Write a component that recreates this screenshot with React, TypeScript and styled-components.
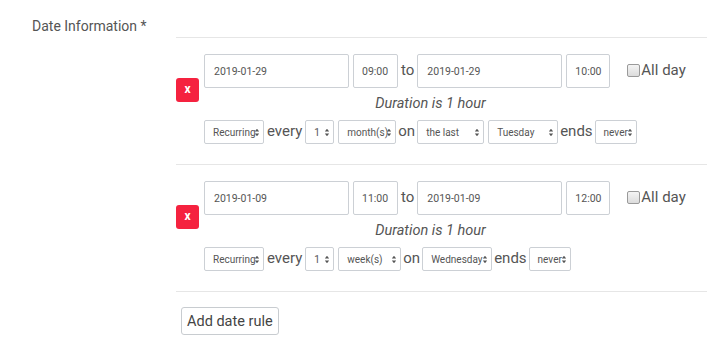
import styled, { createGlobalStyle } from "styled-components";

const GlobalStyle = createGlobalStyle`
  html, body {
    margin: 0;
    padding: 0;
    background: #ffffff;
    font-family: Roboto, "Liberation Sans", sans-serif;
  }
`;

const Page = styled.div`
  width: 707px;
  height: 352px;
  display: grid;
  grid-template-columns: 176px 1fr;
  overflow: hidden;
`;

const Label = styled.div`
  padding: 17px 0 0 32px;
  font-size: 14px;
  color: #555;
  line-height: 18px;
`;

const Rules = styled.div`
  padding-top: 37px;
`;

const Block = styled.div`
  border-top: 1px solid #e6e6e6;
  padding: 16px 0 20px;
  display: grid;
  grid-template-columns: 28px 1fr;
  grid-template-rows: 34px auto auto;
`;

const DeleteCell = styled.div`
  grid-column: 1;
  grid-row: 1 / 4;
  padding-top: 24px;
`;

const DeleteBtn = styled.button`
  width: 23px;
  height: 24px;
  border: none;
  border-radius: 3px;
  background: #f5223f;
  color: #fff;
  font-family: Roboto, "Liberation Sans", sans-serif;
  font-weight: bold;
  font-size: 12px;
  padding: 0 0 2px;
  line-height: 1;
`;

const Row = styled.div`
  grid-column: 2;
  grid-row: 1;
  display: flex;
  align-items: center;
  gap: 4px;
  height: 34px;
`;

const Input = styled.div<{ $w: number }>`
  box-sizing: border-box;
  width: ${(p) => p.$w}px;
  height: 34px;
  border: 1px solid #ccd0d5;
  border-radius: 2px;
  padding: 0 ${(p) => (p.$w < 60 ? 8 : 9)}px;
  display: flex;
  align-items: center;
  font-size: 10.5px;
  color: #555;
`;

const Word = styled.span<{ $mx?: number }>`
  font-size: 15px;
  color: #555;
  margin: 0 ${(p) => p.$mx ?? 0}px;
  line-height: 1;
  padding-bottom: 2px;
`;

const AllDay = styled.label`
  display: flex;
  align-items: center;
  margin-left: 13px;
  margin-top: -2px;
  font-size: 15px;
  color: #555;
`;

const Box = styled.span`
  box-sizing: border-box;
  width: 13px;
  height: 13px;
  border: 1px solid #9a9a9a;
  border-radius: 2px;
  background: linear-gradient(#f4f4f4, #dcdcdc);
  margin-right: 1px;
`;

const Duration = styled.div`
  grid-column: 1 / -1;
  grid-row: 2;
  text-align: center;
  padding-right: 22px;
  font-style: italic;
  font-size: 14.5px;
  color: #555;
  margin-top: 4px;
  line-height: 24px;
`;

const RecRow = styled.div`
  grid-column: 2;
  grid-row: 3;
  display: flex;
  align-items: center;
  gap: 3px;
  margin-top: 4px;
  height: 24px;
`;

const SelectBox = styled.div<{ $w: number }>`
  position: relative;
  box-sizing: border-box;
  width: ${(p) => p.$w}px;
  height: 24px;
  border: 1px solid #ccd0d5;
  border-radius: 2px;
  padding: 0 0 0 8px;
  display: flex;
  align-items: center;
  font-size: 10px;
  color: #555;
  white-space: nowrap;
  overflow: hidden;
  & + & {
    margin-left: 1px;
  }
`;

const Arrows = styled.svg`
  position: absolute;
  right: 3px;
  top: 7px;
`;

const AddRow = styled.div`
  border-top: 1px solid #e6e6e6;
  padding: 15px 0 0 5px;
`;

const AddBtn = styled.button`
  height: 28px;
  padding: 0 5px;
  background: #fff;
  border: 1px solid #c8ccd0;
  border-radius: 3px;
  font-family: Roboto, "Liberation Sans", sans-serif;
  font-size: 14.5px;
  color: #444;
`;

function Select({ w, text }: { w: number; text: string }) {
  return (
    <SelectBox $w={w}>
      {text}
      <Arrows width="6" height="9" viewBox="0 0 6 9">
        <path d="M0.8 3.6 L3 0.8 L5.2 3.6 Z M0.8 5.4 L3 8.2 L5.2 5.4 Z" fill="#555" />
      </Arrows>
    </SelectBox>
  );
}

interface Rule {
  start: string;
  from: string;
  end: string;
  to: string;
  unit: [number, string];
  on: [number, string][];
}

const rules: Rule[] = [
  {
    start: "2019-01-29",
    from: "09:00",
    end: "2019-01-29",
    to: "10:00",
    unit: [58, "month(s)"],
    on: [
      [67, "the last"],
      [70, "Tuesday"],
    ],
  },
  {
    start: "2019-01-09",
    from: "11:00",
    end: "2019-01-09",
    to: "12:00",
    unit: [63, "week(s)"],
    on: [[70, "Wednesday"]],
  },
];

export default function App() {
  return (
    <>
      <GlobalStyle />
      <Page>
        <Label>Date Information *</Label>
        <Rules>
          {rules.map((r) => (
            <Block key={r.start + r.from}>
              <DeleteCell>
                <DeleteBtn>x</DeleteBtn>
              </DeleteCell>
              <Row>
                <Input $w={145}>{r.start}</Input>
                <Input $w={45}>{r.from}</Input>
                <Word $mx={-1}>to</Word>
                <Input $w={145}>{r.end}</Input>
                <Input $w={44}>{r.to}</Input>
                <AllDay>
                  <Box />
                  All day
                </AllDay>
              </Row>
              <Duration>Duration is 1 hour</Duration>
              <RecRow>
                <Select w={60} text="Recurring" />
                <Word>every</Word>
                <Select w={29} text="1" />
                <Select w={r.unit[0]} text={r.unit[1]} />
                <Word $mx={-1}>on</Word>
                {r.on.map(([w, t]) => (
                  <Select key={t} w={w} text={t} />
                ))}
                <Word $mx={-1}>ends</Word>
                <Select w={42} text="never" />
              </RecRow>
            </Block>
          ))}
          <AddRow>
            <AddBtn>Add date rule</AddBtn>
          </AddRow>
        </Rules>
      </Page>
    </>
  );
}
